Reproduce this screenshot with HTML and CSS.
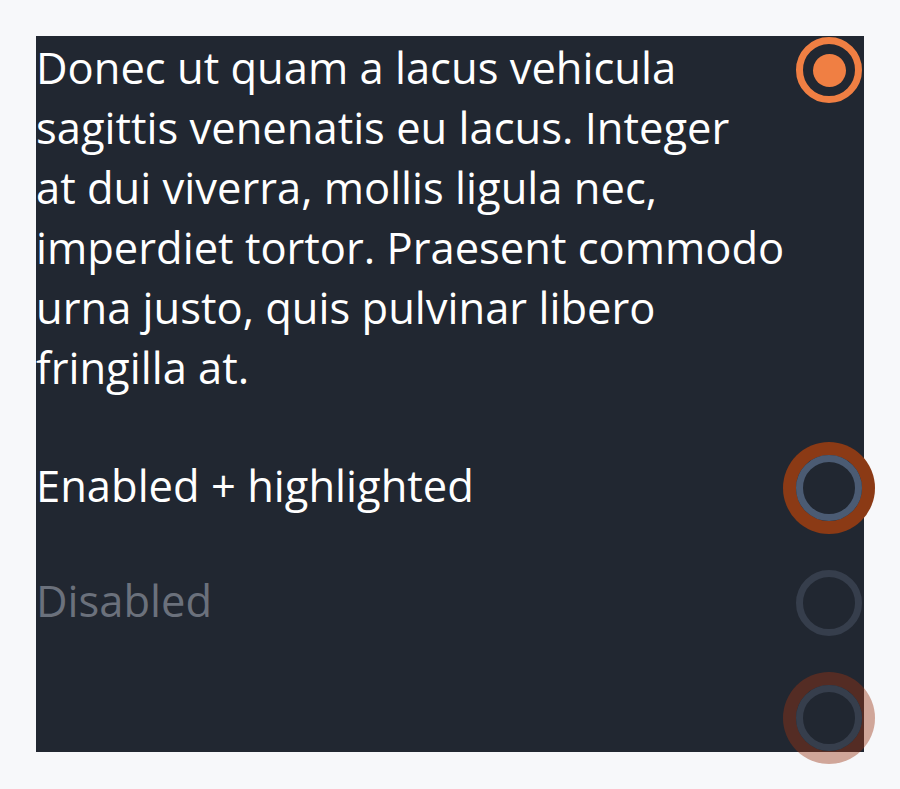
FILE: index.html
```html
<!DOCTYPE html>
<html lang="en">
<head>
<meta charset="utf-8">
<title>Radio list</title>
<link rel="stylesheet" href="styles.css">
</head>
<body>
<div class="panel">
  <label class="row row-top">
    <span class="text">Donec ut quam a lacus vehicula<br>sagittis venenatis eu lacus. Integer<br>at dui viverra, mollis ligula nec,<br>imperdiet tortor. Praesent commodo<br>urna justo, quis pulvinar libero<br>fringilla at.</span>
    <span class="radio checked"><span class="dot"></span></span>
  </label>
  <label class="row">
    <span class="text">Enabled + highlighted</span>
    <span class="radio highlighted"></span>
  </label>
  <label class="row">
    <span class="text disabled">Disabled</span>
    <span class="radio disabled-radio"></span>
  </label>
  <label class="row">
    <span class="text"></span>
    <span class="radio disabled-radio highlighted-soft"></span>
  </label>
</div>
</body>
</html>
```
FILE: styles.css
```css
html, body {
  margin: 0;
  padding: 0;
  background: #f7f8fa;
}
body {
  padding: 36px;
  font-family: "Open Sans", "Noto Sans", sans-serif;
}
.panel {
  width: 828px;
  height: 716px;
  background: #212731;
  display: flex;
  flex-direction: column;
  box-sizing: border-box;
}
.row {
  display: flex;
  align-items: center;
  justify-content: space-between;
  height: 60px;
  margin-top: 55px;
}
.row .text {
  margin-bottom: 5px;
}
.row-top {
  height: auto;
  align-items: flex-start;
  margin-top: 0;
  margin-bottom: 5px;
}
.row-top .text {
  padding-top: 2px;
  margin-bottom: 0;
}
.text {
  color: #ffffff;
  font-size: 43.5px;
  line-height: 60px;
  white-space: nowrap;
}
.text.disabled {
  color: #6b717c;
}
.radio {
  flex: none;
  width: 66px;
  height: 66px;
  box-sizing: border-box;
  border-radius: 50%;
  border: 7px solid #4b5b73;
  margin-right: 2px;
  display: flex;
  align-items: center;
  justify-content: center;
}
.row-top .radio {
  margin-top: 1px;
}
.radio.checked {
  border-color: #f07f43;
}
.dot {
  width: 33px;
  height: 33px;
  border-radius: 50%;
  background: #f07f43;
}
.radio.highlighted {
  box-shadow: 0 0 0 13px #8b3a15;
}
.radio.disabled-radio {
  border-color: #363e4c;
}
.radio.highlighted-soft {
  box-shadow: 0 0 0 13px rgba(154, 52, 18, 0.42);
}
```
